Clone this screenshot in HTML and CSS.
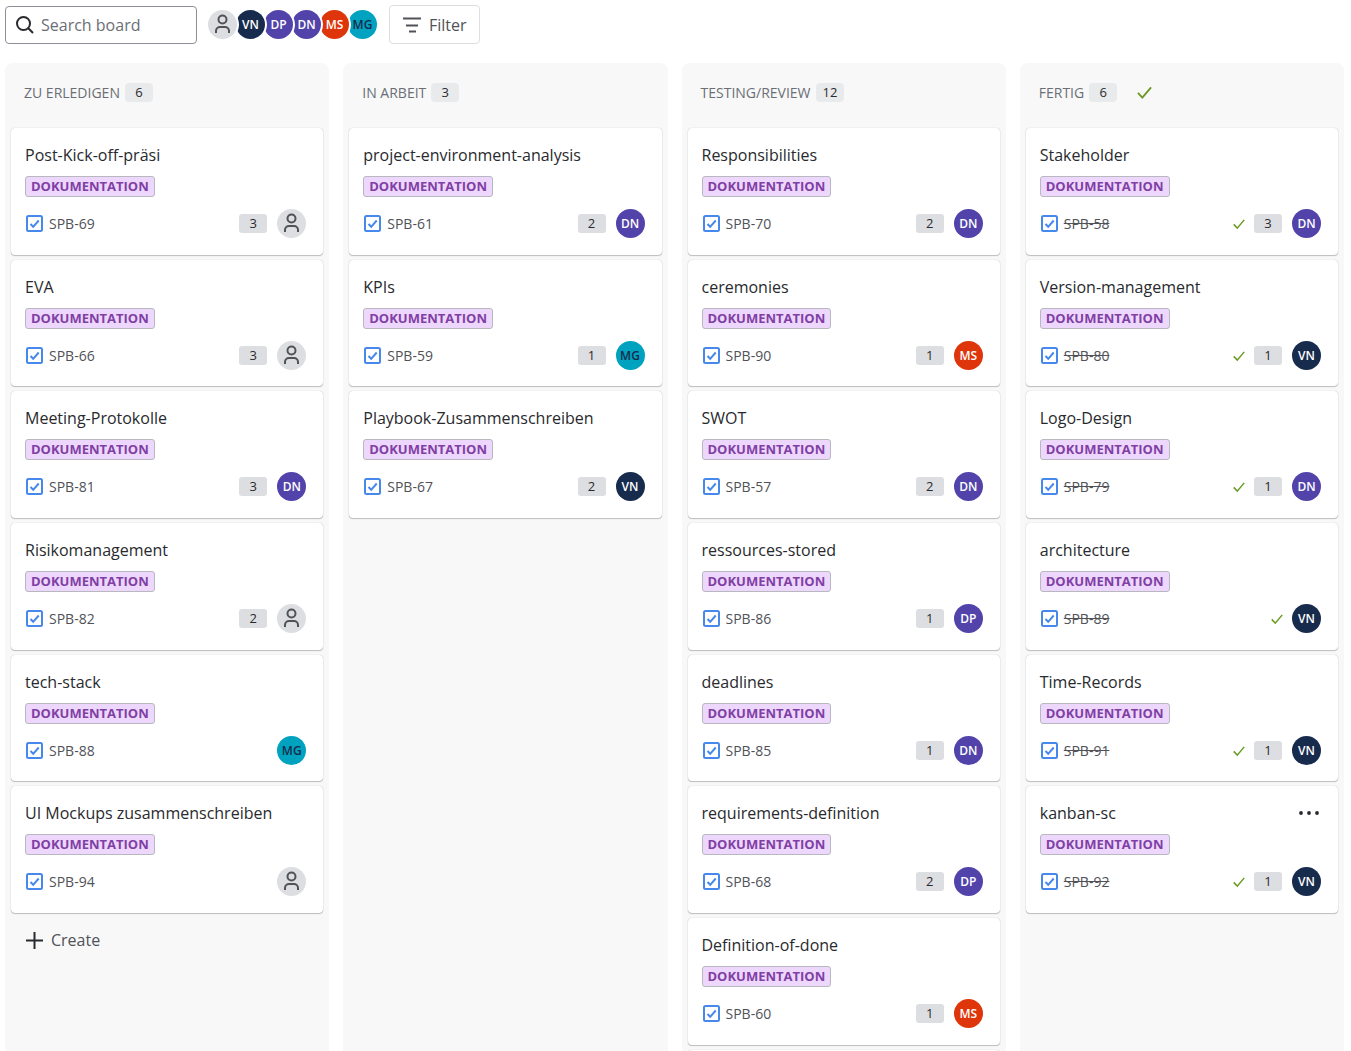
FILE: index.html
```html
<!DOCTYPE html>
<html lang="de">
<head>
<meta charset="utf-8">
<title>Board</title>
<link rel="stylesheet" href="styles.css">
</head>
<body>
<svg class="sprite" aria-hidden="true">
  <symbol id="person" viewBox="0 0 29 29"><circle cx="14.5" cy="9.5" r="4"/><path d="M8 23v-2a4 4 0 0 1 4-4h5a4 4 0 0 1 4 4v2"/></symbol>
  <symbol id="task" viewBox="0 0 17 17"><rect x="1" y="1" width="15" height="15" rx="1.500"/><path d="M4.500 9l2.700 2.800L12.700 5.500"/></symbol>
  <symbol id="check" viewBox="0 0 16 16"><path d="M1 8.500l4.700 5L15 2.500"/></symbol>
</svg>

<header class="toolbar">
  <label class="search">
    <svg class="search-icon" viewBox="0 0 18 18" aria-hidden="true"><circle cx="7.500" cy="7.500" r="6.500"/><path d="M12.300 12.300L17 17"/></svg>
    <input class="search-input" type="text" placeholder="Search board" aria-label="Search board">
  </label>
  <div class="people">
    <span class="avatar none"><svg><use href="#person"/></svg></span>
    <span class="avatar navy">VN</span>
    <span class="avatar purple">DP</span>
    <span class="avatar purple">DN</span>
    <span class="avatar red">MS</span>
    <span class="avatar teal">MG</span>
  </div>
  <button class="filter" type="button">
    <svg class="filter-icon" viewBox="0 0 18 16" aria-hidden="true"><path d="M0 1.500h18M3 8.500h12M6 14.500h7"/></svg>
    Filter
  </button>
</header>

<main class="board">
  <section class="column">
    <h2 class="column-head">ZU ERLEDIGEN <span class="count">6</span></h2>
    <div class="cards">
      <article class="card"><h3 class="title">Post-Kick-off-präsi</h3><span class="label">DOKUMENTATION</span><div class="meta"><svg class="task"><use href="#task"/></svg><a class="key" href="#SPB-69">SPB-69</a><span class="points">3</span><span class="avatar none"><svg><use href="#person"/></svg></span></div></article>
      <article class="card"><h3 class="title">EVA</h3><span class="label">DOKUMENTATION</span><div class="meta"><svg class="task"><use href="#task"/></svg><a class="key" href="#SPB-66">SPB-66</a><span class="points">3</span><span class="avatar none"><svg><use href="#person"/></svg></span></div></article>
      <article class="card"><h3 class="title">Meeting-Protokolle</h3><span class="label">DOKUMENTATION</span><div class="meta"><svg class="task"><use href="#task"/></svg><a class="key" href="#SPB-81">SPB-81</a><span class="points">3</span><span class="avatar purple">DN</span></div></article>
      <article class="card"><h3 class="title">Risikomanagement</h3><span class="label">DOKUMENTATION</span><div class="meta"><svg class="task"><use href="#task"/></svg><a class="key" href="#SPB-82">SPB-82</a><span class="points">2</span><span class="avatar none"><svg><use href="#person"/></svg></span></div></article>
      <article class="card"><h3 class="title">tech-stack</h3><span class="label">DOKUMENTATION</span><div class="meta"><svg class="task"><use href="#task"/></svg><a class="key" href="#SPB-88">SPB-88</a><span class="avatar teal">MG</span></div></article>
      <article class="card"><h3 class="title">UI Mockups zusammenschreiben</h3><span class="label">DOKUMENTATION</span><div class="meta"><svg class="task"><use href="#task"/></svg><a class="key" href="#SPB-94">SPB-94</a><span class="avatar none"><svg><use href="#person"/></svg></span></div></article>
    </div>
    <button class="create" type="button"><svg class="plus" viewBox="0 0 17 17" aria-hidden="true"><path d="M8.500 0v17M0 8.500h17"/></svg>Create</button>
  </section>

  <section class="column">
    <h2 class="column-head">IN ARBEIT <span class="count">3</span></h2>
    <div class="cards">
      <article class="card"><h3 class="title">project-environment-analysis</h3><span class="label">DOKUMENTATION</span><div class="meta"><svg class="task"><use href="#task"/></svg><a class="key" href="#SPB-61">SPB-61</a><span class="points">2</span><span class="avatar purple">DN</span></div></article>
      <article class="card"><h3 class="title">KPIs</h3><span class="label">DOKUMENTATION</span><div class="meta"><svg class="task"><use href="#task"/></svg><a class="key" href="#SPB-59">SPB-59</a><span class="points">1</span><span class="avatar teal">MG</span></div></article>
      <article class="card"><h3 class="title">Playbook-Zusammenschreiben</h3><span class="label">DOKUMENTATION</span><div class="meta"><svg class="task"><use href="#task"/></svg><a class="key" href="#SPB-67">SPB-67</a><span class="points">2</span><span class="avatar navy">VN</span></div></article>
    </div>
  </section>

  <section class="column">
    <h2 class="column-head">TESTING/REVIEW <span class="count">12</span></h2>
    <div class="cards">
      <article class="card"><h3 class="title">Responsibilities</h3><span class="label">DOKUMENTATION</span><div class="meta"><svg class="task"><use href="#task"/></svg><a class="key" href="#SPB-70">SPB-70</a><span class="points">2</span><span class="avatar purple">DN</span></div></article>
      <article class="card"><h3 class="title">ceremonies</h3><span class="label">DOKUMENTATION</span><div class="meta"><svg class="task"><use href="#task"/></svg><a class="key" href="#SPB-90">SPB-90</a><span class="points">1</span><span class="avatar red">MS</span></div></article>
      <article class="card"><h3 class="title">SWOT</h3><span class="label">DOKUMENTATION</span><div class="meta"><svg class="task"><use href="#task"/></svg><a class="key" href="#SPB-57">SPB-57</a><span class="points">2</span><span class="avatar purple">DN</span></div></article>
      <article class="card"><h3 class="title">ressources-stored</h3><span class="label">DOKUMENTATION</span><div class="meta"><svg class="task"><use href="#task"/></svg><a class="key" href="#SPB-86">SPB-86</a><span class="points">1</span><span class="avatar purple">DP</span></div></article>
      <article class="card"><h3 class="title">deadlines</h3><span class="label">DOKUMENTATION</span><div class="meta"><svg class="task"><use href="#task"/></svg><a class="key" href="#SPB-85">SPB-85</a><span class="points">1</span><span class="avatar purple">DN</span></div></article>
      <article class="card"><h3 class="title">requirements-definition</h3><span class="label">DOKUMENTATION</span><div class="meta"><svg class="task"><use href="#task"/></svg><a class="key" href="#SPB-68">SPB-68</a><span class="points">2</span><span class="avatar purple">DP</span></div></article>
      <article class="card"><h3 class="title">Definition-of-done</h3><span class="label">DOKUMENTATION</span><div class="meta"><svg class="task"><use href="#task"/></svg><a class="key" href="#SPB-60">SPB-60</a><span class="points">1</span><span class="avatar red">MS</span></div></article>
      <article class="card"></article>
    </div>
  </section>

  <section class="column">
    <h2 class="column-head">FERTIG <span class="count">6</span><svg class="head-check"><use href="#check"/></svg></h2>
    <div class="cards">
      <article class="card done"><h3 class="title">Stakeholder</h3><span class="label">DOKUMENTATION</span><div class="meta"><svg class="task"><use href="#task"/></svg><a class="key" href="#SPB-58">SPB-58</a><svg class="check"><use href="#check"/></svg><span class="points">3</span><span class="avatar purple">DN</span></div></article>
      <article class="card done"><h3 class="title">Version-management</h3><span class="label">DOKUMENTATION</span><div class="meta"><svg class="task"><use href="#task"/></svg><a class="key" href="#SPB-80">SPB-80</a><svg class="check"><use href="#check"/></svg><span class="points">1</span><span class="avatar navy">VN</span></div></article>
      <article class="card done"><h3 class="title">Logo-Design</h3><span class="label">DOKUMENTATION</span><div class="meta"><svg class="task"><use href="#task"/></svg><a class="key" href="#SPB-79">SPB-79</a><svg class="check"><use href="#check"/></svg><span class="points">1</span><span class="avatar purple">DN</span></div></article>
      <article class="card done"><h3 class="title">architecture</h3><span class="label">DOKUMENTATION</span><div class="meta"><svg class="task"><use href="#task"/></svg><a class="key" href="#SPB-89">SPB-89</a><svg class="check"><use href="#check"/></svg><span class="avatar navy">VN</span></div></article>
      <article class="card done"><h3 class="title">Time-Records</h3><span class="label">DOKUMENTATION</span><div class="meta"><svg class="task"><use href="#task"/></svg><a class="key" href="#SPB-91">SPB-91</a><svg class="check"><use href="#check"/></svg><span class="points">1</span><span class="avatar navy">VN</span></div></article>
      <article class="card done"><h3 class="title">kanban-sc<button class="more" type="button" aria-label="Mehr"><svg class="dots" viewBox="0 0 20 4"><circle cx="2" cy="2" r="1.900"/><circle cx="10" cy="2" r="1.900"/><circle cx="18" cy="2" r="1.900"/></svg></button></h3><span class="label">DOKUMENTATION</span><div class="meta"><svg class="task"><use href="#task"/></svg><a class="key" href="#SPB-92">SPB-92</a><svg class="check"><use href="#check"/></svg><span class="points">1</span><span class="avatar navy">VN</span></div></article>
    </div>
  </section>
</main>
</body>
</html>
```
FILE: styles.css
```css
* { box-sizing: border-box; }

body {
  margin: 0;
  height: 100vh;
  overflow: hidden;
  display: flex;
  flex-direction: column;
  background: #fff;
  color: #292a2e;
  font-family: "Open Sans", "Noto Sans", sans-serif;
  font-size: 16px;
}

svg { display: block; flex: none; fill: none; stroke: currentColor; }
button, input { font: inherit; color: inherit; }
.sprite { position: absolute; width: 0; height: 0; }

/* Toolbar */
.toolbar {
  display: flex;
  align-items: center;
  padding: 5px 5px 19px;
}
.search {
  display: flex;
  align-items: center;
  gap: 7px;
  width: 192px;
  height: 38px;
  padding: 0 10px;
  border: 1px solid #8c8f97;
  border-radius: 4px;
}
.search-icon { width: 18px; height: 18px; stroke-width: 2; }
.search-input {
  flex: 1;
  min-width: 0;
  padding: 0;
  border: 0;
  outline: 0;
  background: none;
}
.search-input::placeholder { color: #6b6e76; opacity: 1; }

.people { display: flex; margin: 0 11px; isolation: isolate; }
.people .avatar { margin-right: -1px; position: relative; box-shadow: 0 0 0 2px #fff; }
.people .avatar:nth-child(1) { z-index: 6; }
.people .avatar:nth-child(2) { z-index: 5; }
.people .avatar:nth-child(3) { z-index: 4; }
.people .avatar:nth-child(4) { z-index: 3; }
.people .avatar:nth-child(5) { z-index: 2; }

.avatar {
  display: flex;
  flex: none;
  align-items: center;
  justify-content: center;
  width: 29px;
  height: 29px;
  border-radius: 50%;
  color: #fff;
  font-size: 12px;
  font-weight: 600;
}
.none { background: #dddee1; color: #505258; }
.none svg { width: 29px; height: 29px; stroke-width: 2; }
.navy { background: #172b4d; }
.purple { background: #5243aa; }
.red { background: #de350b; }
.teal { background: #00a3bf; color: #172b4d; }

.filter {
  display: flex;
  align-items: center;
  gap: 8px;
  height: 39px;
  margin-left: 2px;
  padding: 0 12px 0 13px;
  border: 1px solid #dddee1;
  border-radius: 4px;
  background: #fff;
  color: #505258;
}
.filter-icon { width: 18px; height: 16px; stroke-width: 2; }

/* Board */
.board {
  flex: 1;
  min-height: 0;
  display: grid;
  grid-template-columns: repeat(4, minmax(0, 1fr));
  gap: 14px;
  padding: 0 7px 0 5px;
}
.column {
  min-height: 0;
  overflow: hidden;
  padding: 0 6px;
  border-radius: 8px 8px 0 0;
  background: #f8f8f8;
}
.column-head {
  display: flex;
  align-items: center;
  gap: 5px;
  height: 65px;
  margin: 0;
  padding: 0 13px 7px;
  color: #6b6e76;
  font-size: 14px;
  font-weight: 400;
}
.count {
  min-width: 28px;
  padding: 0 7px;
  border-radius: 4px;
  background: #e9eaec;
  color: #292a2e;
  font-size: 13px;
  line-height: 19px;
  text-align: center;
}
.head-check { width: 15px; height: 15px; margin-left: 15px; color: #6a9a23; stroke-width: 2; }

.cards {
  display: grid;
  grid-auto-rows: 127px 126px 127px;
  gap: 5px;
}
.card {
  padding: 15px 17px 0 14px;
  border-radius: 4px;
  background: #fff;
  box-shadow: 0 1px 1px rgba(30, 31, 33, 0.25), 0 0 1px rgba(30, 31, 33, 0.31);
}
.title {
  display: flex;
  align-items: center;
  justify-content: space-between;
  margin: 0 0 9px;
  font-size: 16px;
  font-weight: 400;
  line-height: 24px;
}
.more { padding: 4px 2px; border: 0; background: none; }
.dots { width: 20px; height: 4px; fill: currentColor; stroke: none; }
.label {
  display: block;
  width: fit-content;
  padding: 0 5px;
  border: 1px solid #b7b9be;
  border-radius: 3px;
  background: #eed7fc;
  color: #803fa5;
  font-size: 13px;
  font-weight: 700;
  line-height: 19px;
}
.meta { display: flex; align-items: center; margin-top: 12px; }
.task { width: 17px; height: 17px; margin-left: 1px; color: #4688ec; stroke-width: 2; }
.key {
  margin: 0 auto 0 6px;
  color: #505258;
  font-size: 14px;
  text-decoration: none;
}
.done .key { text-decoration: line-through; }
.check { width: 12px; height: 12px; margin-right: 9px; color: #6a9a23; stroke-width: 2; }
.points {
  width: 28px;
  margin-right: 10px;
  border-radius: 3px;
  background: #dddee1;
  font-size: 13px;
  line-height: 19px;
  text-align: center;
}

.create {
  display: flex;
  align-items: center;
  gap: 8px;
  margin-top: 15px;
  padding: 0 15px;
  border: 0;
  background: none;
  color: #505258;
  line-height: 24px;
}
.plus { width: 17px; height: 17px; color: #292a2e; stroke-width: 2; }
```
